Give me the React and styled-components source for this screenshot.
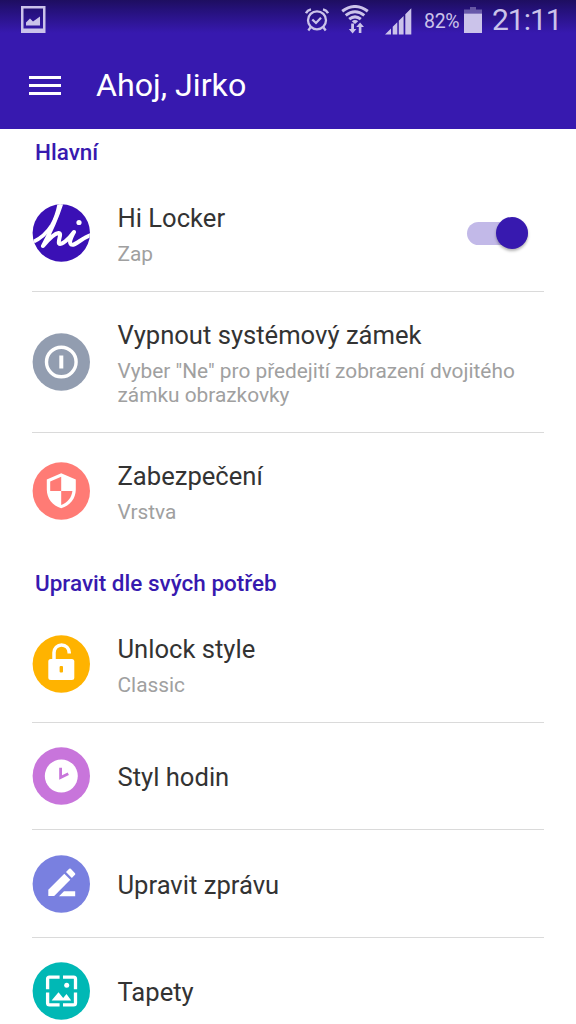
import React from 'react'
import styled, { createGlobalStyle } from 'styled-components';

const Primary = '#3719AF';
const StatusColor = '#CBC3EA';

const GlobalStyle = createGlobalStyle`
    * {
        box-sizing: border-box;
    }

    body {
        margin: 0;
        overflow: hidden;
        background: #FFF;
        font-family: Roboto, sans-serif;
    }

    svg {
        display: block;
        flex: none;
    }
`

function HiIcon() {
    return (
        <svg width="58" height="58" viewBox="0 0 58 58" fill="none">
            <clipPath id="hi-clip">
                <circle cx="29.3" cy="29" r="28.7" />
            </clipPath>
            <circle cx="29.3" cy="29" r="28.7" fill="#3A10B5" />
            <g clipPath="url(#hi-clip)" stroke="#FFF" strokeLinecap="round" strokeLinejoin="round">
                <path d="M0 38.5C8 35 15 29 20 21C24 14 26 7 27.5 -1" strokeWidth="3.6" />
                <path d="M29.5 -1C25 13 19 27 11 42C16 36 22 29.5 26.5 29C30.5 29 25.5 37 27 39.5C29 42 37 35 42 28C39.5 33 36.5 38.5 39 40.5C43 42.5 50 33.5 59 31" strokeWidth="4" />
            </g>
            <circle cx="47" cy="18.5" r="2.6" fill="#FFF" />
        </svg>
    )
}

function PowerIcon() {
    return (
        <svg width="58" height="58" viewBox="0 0 58 58" fill="none">
            <circle cx="29.3" cy="29" r="28.7" fill="#929DB0" />
            <circle cx="29.3" cy="29" r="14.8" stroke="#FFF" strokeWidth="3.4" />
            <path d="M29.3 22.5V35.5" stroke="#FFF" strokeWidth="4" />
        </svg>
    )
}

function ShieldIcon() {
    return (
        <svg width="58" height="58" viewBox="0 0 58 58">
            <circle cx="29.3" cy="29" r="28.7" fill="#FF7B75" />
            <path fill="#FFF" d="M29.2 11.3L43.8 17.5V27.5C43.8 36.5 38 43.7 29.2 46.3C20.4 43.7 14.8 36.5 14.8 27.5V17.5Z" />
            <path fill="#FF7B75" d="M29.2 14.8V29H18.2V19.5ZM29.2 29H40.4C39.7 35.5 35.6 40.7 29.2 43Z" />
        </svg>
    )
}

function LockIcon() {
    return (
        <svg width="58" height="58" viewBox="0 0 58 58" fill="none">
            <circle cx="29.3" cy="29" r="28.7" fill="#FFB300" />
            <path d="M22 25V17.5A7.6 7.6 0 0 1 37.2 17.5V18.5" stroke="#FFF" strokeWidth="3.5" />
            <rect x="16.3" y="24" width="26" height="21" rx="2.5" fill="#FFF" />
            <rect x="27.6" y="31" width="3.4" height="6.6" rx="1" fill="#FFB300" />
        </svg>
    )
}

function ClockIcon() {
    return (
        <svg width="58" height="58" viewBox="0 0 58 58" fill="none">
            <circle cx="29.3" cy="29" r="28.7" fill="#C875DB" />
            <circle cx="29.3" cy="29" r="16.5" fill="#FFF" />
            <path d="M28.6 20.7V30.5L36.3 26.8" stroke="#C875DB" strokeWidth="2.8" />
        </svg>
    )
}

function PencilIcon() {
    return (
        <svg width="58" height="58" viewBox="0 0 58 58" fill="#FFF">
            <circle cx="29.3" cy="29" r="28.7" fill="#7980E0" />
            <path d="M16.3 41V34.8L32.3 18.8L38.3 24.8L22.2 41Z" />
            <path d="M34 17L37.2 13.8Q38 13.2 38.8 13.8L43 18.2Q43.7 19 43 19.8L39.8 23Z" />
            <path d="M43.2 36.2V41.2H27L32 36.2Z" />
        </svg>
    )
}

function WallpaperIcon() {
    return (
        <svg width="58" height="58" viewBox="0 0 58 58" fill="none">
            <circle cx="29.3" cy="29" r="28.7" fill="#00B8B5" />
            <path
                d="M27.6 15.2H17.5Q15.6 15.2 15.6 17.1V27.2M31 15.2H41.6Q43.5 15.2 43.5 17.1V27.2M15.6 30.6V41Q15.6 42.9 17.5 42.9H27.6M43.5 30.6V41Q43.5 42.9 41.6 42.9H31"
                stroke="#FFF"
                strokeWidth="3.3"
            />
            <circle cx="34.7" cy="23.3" r="2.5" fill="#FFF" />
            <path d="M19.6 38.6L26.5 30.2L31.2 36L34.5 32L39.2 38.6Z" fill="#FFF" />
        </svg>
    )
}

function PictureIcon() {
    return (
        <svg width="25" height="28" viewBox="0 0 25 28">
            <path fill={StatusColor} fillRule="evenodd" d="M0 0H24.5V27H0ZM2.5 2.5V22.5H22V2.5Z" />
            <path fill={StatusColor} d="M5 19.5V16.5L9 12.5L12 15.5L19 10.5V19.5Z" />
        </svg>
    )
}

function AlarmIcon() {
    return (
        <svg width="24" height="24" viewBox="0 0 24 24" fill="none" stroke={StatusColor} strokeWidth="2.3">
            <circle cx="12" cy="12.3" r="9" />
            <path d="M7.3 11.5L11 15L16 9.8" />
            <path d="M1 5.2Q2.3 2.2 6 1.3M18 1.3Q21.7 2.2 23 5.2M5.5 19.5L3.3 22.5M18.5 19.5L20.7 22.5" />
        </svg>
    )
}

function WifiIcon() {
    return (
        <svg width="28" height="30" viewBox="0 0 28 30" fill="none">
            <g stroke={StatusColor} strokeWidth="3">
                <path d="M1.2 6.3Q14 -3.3 26.8 6.3" />
                <path d="M4.7 10.4Q14 3.2 23.3 10.4" />
                <path d="M8.2 14.2Q14 9.5 19.8 14.2" />
            </g>
            <path d="M10.8 16.2Q14 13.8 17.2 16.2L14 19Z" fill={StatusColor} />
            <path
                d="M10.2 18.5H13V24H15.4L11.6 28.6L7.8 24H10.2ZM17.8 28V22H15.2L19.1 17.5L23 22H20.4V28Z"
                fill={StatusColor}
            />
        </svg>
    )
}

function SignalIcon() {
    return (
        <svg width="27" height="27" viewBox="0 0 27 27" fill={StatusColor}>
            <path d="M0 26.5L6 20.5V26.5ZM7.7 18.8L12.3 14.2V26.5H7.7ZM13.8 12.7L18.6 7.9V26.5H13.8ZM20.3 6.2L26.3 0.2V26.5H20.3Z" />
        </svg>
    )
}

function BatteryIcon() {
    return (
        <svg width="18" height="27" viewBox="0 0 18 27" fill={StatusColor}>
            <path opacity="0.4" d="M0 2.5H6V0H12V2.5H18V6.5H0Z" />
            <rect y="6.5" width="18" height="19.5" />
        </svg>
    )
}

function Item({ icon, title, text, height, last, children }) {
    return (
        <Row $height={height} $last={last}>
            {icon}
            <RowText>
                <RowTitle $single={!text}>{title}</RowTitle>
                {text && <RowSubtitle>{text}</RowSubtitle>}
            </RowText>
            {children}
        </Row>
    )
}

function App() {
    return (
        <Screen>
            <GlobalStyle />
            <Header>
                <StatusBar>
                    <PictureIcon />
                    <StatusRight>
                        <AlarmIcon />
                        <WifiIcon />
                        <SignalIcon />
                        <Percent>82%</Percent>
                        <BatteryIcon />
                        <Time>21:11</Time>
                    </StatusRight>
                </StatusBar>
                <Toolbar>
                    <MenuButton aria-label="Menu">
                        <MenuLine />
                        <MenuLine />
                        <MenuLine />
                    </MenuButton>
                    <Title>Ahoj, Jirko</Title>
                </Toolbar>
            </Header>

            <SectionTitle $height={46}>Hlavní</SectionTitle>
            <List>
                <Item icon={<HiIcon />} title="Hi Locker" text="Zap" height={117}>
                    <Switch>
                        <Thumb />
                    </Switch>
                </Item>
                <Item
                    icon={<PowerIcon />}
                    title="Vypnout systémový zámek"
                    text={'Vyber "Ne" pro předejití zobrazení dvojitého zámku obrazkovky'}
                    height={141}
                />
                <Item icon={<ShieldIcon />} title="Zabezpečení" text="Vrstva" height={116} last />
            </List>

            <SectionTitle $height={57} $top={10}>Upravit dle svých potřeb</SectionTitle>
            <List>
                <Item icon={<LockIcon />} title="Unlock style" text="Classic" height={117} />
                <Item icon={<ClockIcon />} title="Styl hodin" height={107} />
                <Item icon={<PencilIcon />} title="Upravit zprávu" height={108} />
                <Item icon={<WallpaperIcon />} title="Tapety" height={106} last />
            </List>
        </Screen>
    )
}

export default App

const Screen = styled.div`
    width: 576px;
    height: 1024px;
    overflow: hidden;
    background: #FFF;
`

const Header = styled.header`
    height: 129px;
    background: linear-gradient(#1E0E60 0px, #25117A 10px, #3719AF 33px, ${Primary} 100%);
`

const StatusBar = styled.div`
    display: flex;
    justify-content: space-between;
    align-items: center;
    height: 42px;
    padding: 0 15px 2px 21px;
    color: ${StatusColor};
`

const StatusRight = styled.div`
    display: flex;
    align-items: center;

    svg:nth-of-type(2) {
        margin-left: 12px;
    }

    svg:nth-of-type(3) {
        margin: 3px 0 0 16px;
    }
`

const Percent = styled.span`
    width: 35px;
    margin: 2px 5px 0 12px;
    font-size: 19.5px;
    letter-spacing: -0.3px;
`

const Time = styled.span`
    width: 69px;
    margin-left: 10px;
    font-size: 30px;
    letter-spacing: -1px;
    line-height: 36px;
    white-space: nowrap;
`

const Toolbar = styled.div`
    display: flex;
    align-items: center;
    height: 87px;
`

const MenuButton = styled.button`
    display: flex;
    flex-direction: column;
    gap: 5px;
    width: 32px;
    margin: 0 35px 0 29px;
    padding: 0;
    border: 0;
    background: none;
`

const MenuLine = styled.span`
    height: 3px;
    background: #FFF;
`

const Title = styled.h1`
    margin: 0;
    padding-bottom: 2px;
    color: #FFF;
    font-size: 32.2px;
    font-weight: 400;
    line-height: 40px;
`

const SectionTitle = styled.h2`
    display: flex;
    align-items: center;
    height: ${props => props.$height}px;
    margin: 0;
    padding-top: ${props => props.$top || 0}px;
    padding-left: 35px;
    color: ${Primary};
    font-size: 22.5px;
    font-weight: 500;
`

const List = styled.div`
    padding: 0 32px;
`

const Row = styled.div`
    display: flex;
    align-items: center;
    height: ${props => props.$height}px;
    border-bottom: ${props => props.$last ? '0' : '1px solid #DADADA'};
`

const RowText = styled.div`
    flex: 1;
    margin-left: 27.5px;
`

const RowTitle = styled.div`
    padding-top: ${props => props.$single ? 2 : 0}px;
    color: #333;
    font-size: 25.6px;
    line-height: 34px;
`

const RowSubtitle = styled.div`
    margin: 7px 0 0;
    color: #A0A0A0;
    font-size: 20.85px;
    line-height: 24px;
`

const Switch = styled.div`
    display: flex;
    align-items: center;
    justify-content: flex-end;
    width: 61px;
    height: 23px;
    margin-right: 16px;
    border-radius: 12px;
    background: #C2B9E8;
`

const Thumb = styled.div`
    flex: none;
    width: 32px;
    height: 32px;
    border-radius: 50%;
    background: ${Primary};
    box-shadow: 0 2px 3px rgba(0, 0, 0, 0.3);
`
